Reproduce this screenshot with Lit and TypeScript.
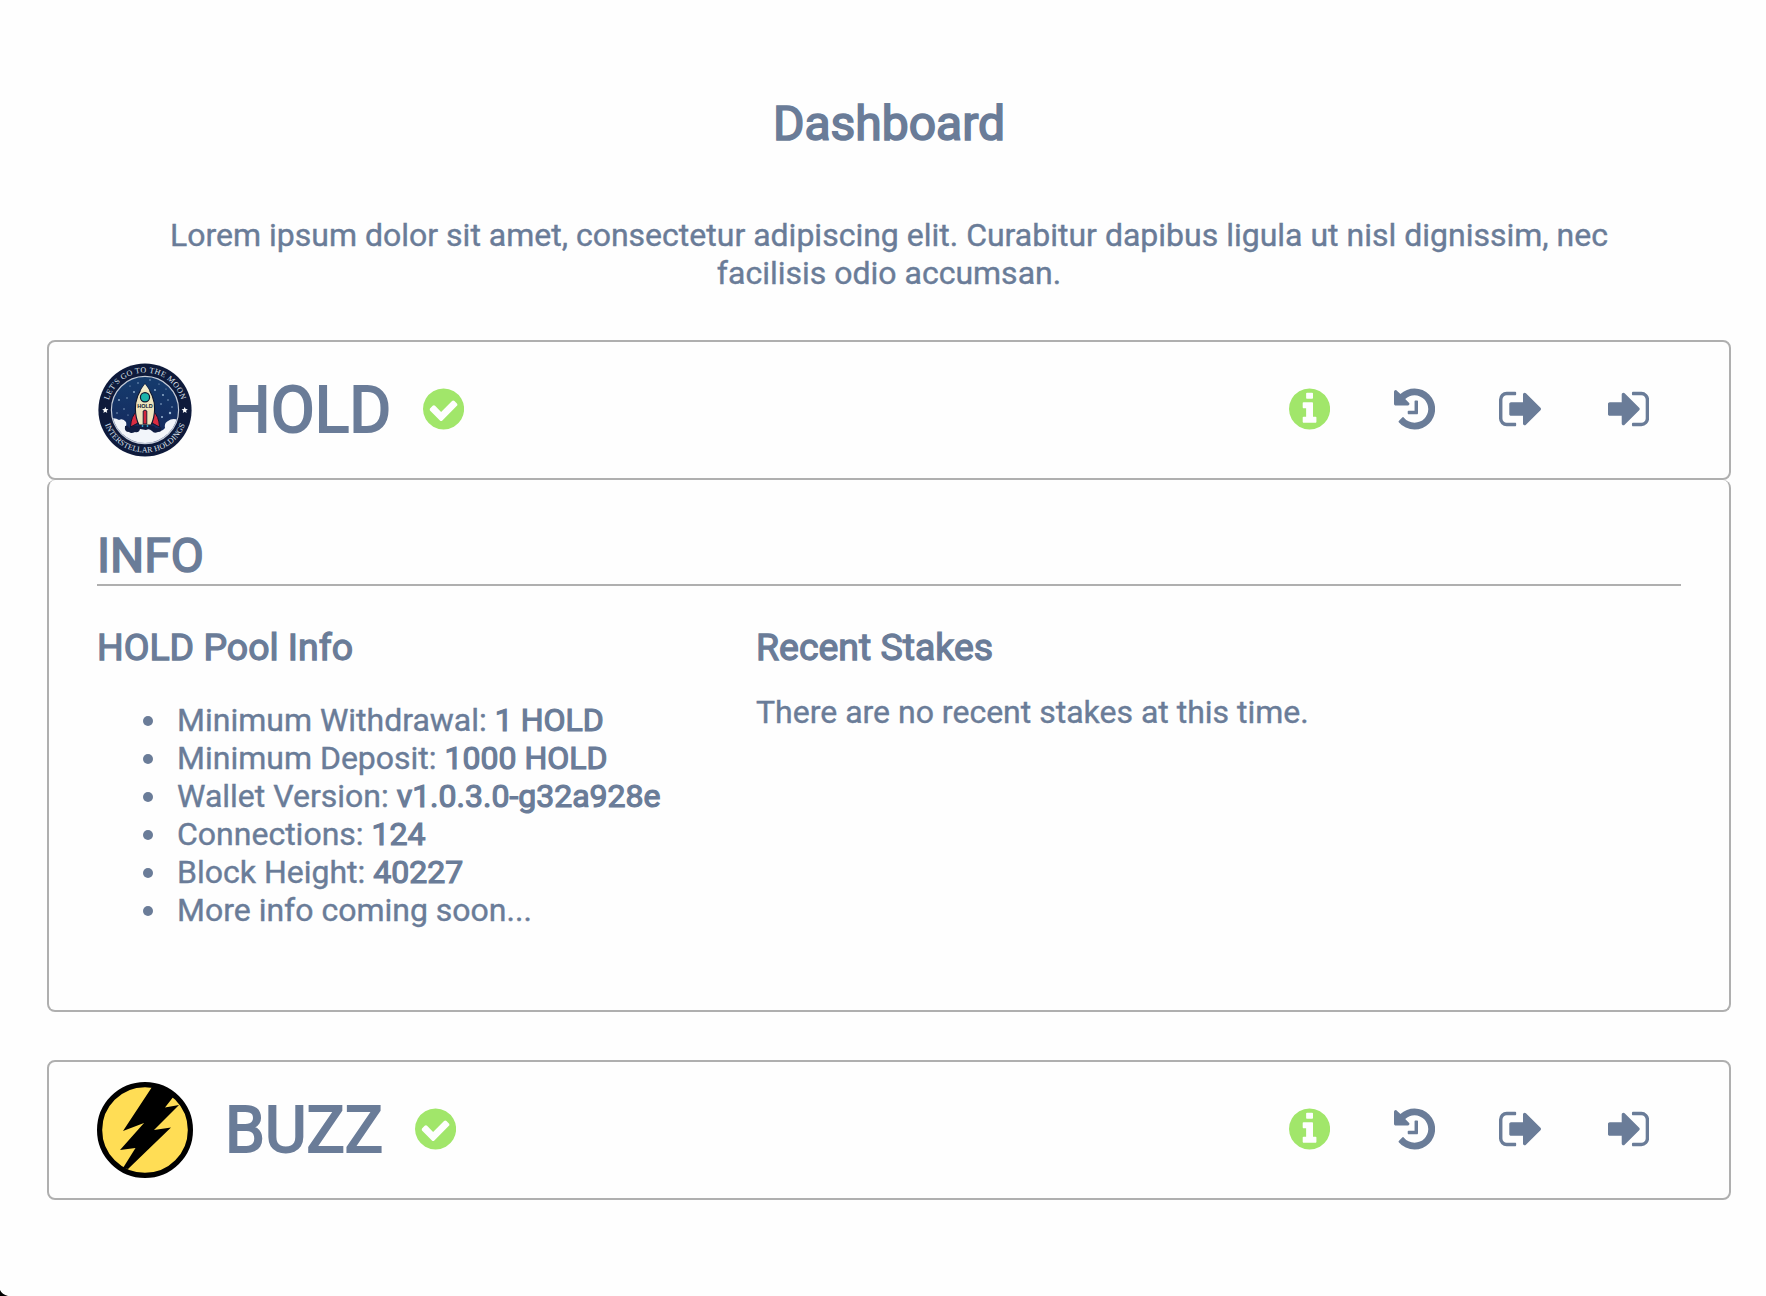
import { LitElement, html, css, svg } from "lit";
import { customElement, property } from "lit/decorators.js";

const DISC =
  "m252 162q0 209-103 385.5t-279.5 279.5-385.5 103-385.5-103-279.5-279.5-103-385.5 103-385.5 279.5-279.5 385.5-103 385.5 103 279.5 279.5 103 385.5z";

const ICONS: Record<string, { box: string; width: number; d: string }> = {
  check: {
    box: "128 0 1536 1792",
    width: 41.14,
    d: "M1412 734q0-28-18-46l-91-90q-19-19-45-19t-45 19l-408 407-226-226q-19-19-45-19t-45 19l-91 90q-18 18-18 46 0 27 18 45l362 362q19 19 45 19 27 0 46-19l543-543q18-18 18-45z" + DISC,
  },
  info: {
    box: "128 0 1536 1792",
    width: 41.14,
    d: "M1152 1376v-160q0-14-9-23t-23-9h-96v-512q0-14-9-23t-23-9h-320q-14 0-23 9t-9 23v160q0 14 9 23t23 9h96v320h-96q-14 0-23 9t-9 23v160q0 14 9 23t23 9h448q14 0 23-9t9-23zm-128-896v-160q0-14-9-23t-23-9h-192q-14 0-23 9t-9 23v160q0 14 9 23t23 9h192q14 0 23-9t9-23zm640 416q0 209-103 385.5t-279.5 279.5-385.5 103-385.5-103-279.5-279.5-103-385.5 103-385.5 279.5-279.5 385.5-103 385.5 103 279.5 279.5 103 385.5z",
  },
  history: {
    box: "128 0 1536 1792",
    width: 41.14,
    d: "M1664 896q0 156-61 298t-164 245-245 164-298 61q-172 0-327-72.5t-264-204.5q-7-10-6.5-22.5t8.5-20.5l137-138q10-9 25-9 16 2 23 12 73 95 179 147t225 52q104 0 198.5-40.5t163.5-109.5 109.5-163.5 40.5-198.5-40.5-198.5-109.5-163.5-163.5-109.5-198.5-40.5q-98 0-188 35.5t-160 101.5l137 138q31 30 14 69-17 40-59 40h-448q-26 0-45-19t-19-45v-448q0-42 40-59 39-17 69 14l130 129q107-101 244.5-156.5t284.5-55.5q156 0 298 61t245 164 164 245 61 298zm-640-288v448q0 14-9 23t-23 9h-320q-14 0-23-9t-9-23v-64q0-14 9-23t23-9h224v-352q0-14 9-23t23-9h64q14 0 23 9t9 23z",
  },
  withdraw: {
    box: "64 0 1664 1792",
    width: 44.57,
    d: "M704 1440q0 4 1 20t.5 26.5-3 23.5-10 19.5-20.5 6.5h-320q-119 0-203.5-84.5t-84.5-203.5v-704q0-119 84.5-203.5t203.5-84.5h320q13 0 22.5 9.5t9.5 22.5q0 4 1 20t.5 26.5-3 23.5-10 19.5-20.5 6.5h-320q-66 0-113 47t-47 113v704q0 66 47 113t113 47h312l11.5 1 11.5 3 8 5.5 7 9 2 13.5zm928-544q0 26-19 45l-544 544q-19 19-45 19t-45-19-19-45v-288h-448q-26 0-45-19t-19-45v-384q0-26 19-45t45-19h448v-288q0-26 19-45t45-19 45 19l544 544q19 19 19 45z",
  },
  deposit: {
    box: "128 0 1536 1792",
    width: 41.14,
    d: "M1312 896q0 26-19 45l-544 544q-19 19-45 19t-45-19-19-45v-288h-448q-26 0-45-19t-19-45v-384q0-26 19-45t45-19h448v-288q0-26 19-45t45-19 45 19l544 544q19 19 19 45zm352-352v704q0 119-84.5 203.5t-203.5 84.5h-320q-13 0-22.5-9.5t-9.5-22.5q0-4-1-20t-.5-26.5 3-23.5 10-19.5 20.5-6.5h320q66 0 113-47t47-113v-704q0-66-47-113t-113-47h-312l-11.5-1-11.5-3-8-5.5-7-9-2-13.5q0-4-1-20t-.5-26.5 3-23.5 10-19.5 20.5-6.5h320q119 0 203.5 84.5t84.5 203.5z",
  },
};

const icon = (name: string) => {
  const i = ICONS[name];
  return html`<svg viewBox=${i.box} width=${i.width} height="48" fill="currentColor" aria-hidden="true">
    <path d=${i.d}></path>
  </svg>`;
};

const STARS = [
  [30, 36, 0.7], [37, 30, 0.9], [41, 21, 0.7], [33, 24, 0.6], [22, 38, 0.9], [27, 47, 0.7],
  [58, 28, 0.9], [62, 22, 0.6], [66, 33, 0.9], [71, 38, 0.7], [64, 42, 0.8], [75, 45, 0.7],
  [73, 51, 1.2], [65, 55, 1], [53, 18, 0.7], [20, 51, 0.7], [69, 27, 0.6], [31, 53, 0.6],
];

const holdLogo = html`<svg viewBox="0 0 96 96" width="96" height="96">
  <defs>
    <path id="arc-top" d="M10.6 48A37.4 37.4 0 0 1 85.4 48"></path>
    <path id="arc-bottom" d="M5.4 48A42.6 42.6 0 0 0 90.6 48"></path>
    <clipPath id="sky"><circle cx="48" cy="48" r="33"></circle></clipPath>
    <linearGradient id="night" x1="0" y1="0" x2="0" y2="1">
      <stop offset="0" stop-color="#153c6e"></stop>
      <stop offset="1" stop-color="#14265a"></stop>
    </linearGradient>
  </defs>
  <circle cx="48" cy="48" r="46.6" fill="#0e1a3b"></circle>
  <circle cx="48" cy="48" r="33.6" fill="url(#night)" stroke="#c3cbd8" stroke-width="1.2"></circle>
  <g clip-path="url(#sky)">
    ${STARS.map(([x, y, r]) => svg`<circle cx=${x} cy=${y} r=${r} fill="#9db9d6"></circle>`)}
    <path d="M12 57Q18 55 22 58Q26 56 29 60Q30 64 28 67Q31 70 34 69Q36 65 39 67Q42 64 45 66L52 66Q54 64 57 69Q60 69 62 68Q65 70 68 66Q67 61 71 59Q76 55 84 59V84H12Z" fill="#f2f5fa"></path>
    <path d="M28 64Q31 63 32 66Q36 63 40 64L57 64Q59 68 64 65Q66 70 61 70Q57 72 55 69Q52 66 49 68L43 67Q42 71 38 70Q34 72 32 70Q27 70 28 64Z" fill="#101d42"></path>
  </g>
  <path d="M40 49Q34 54 33.5 65L41 61Z" fill="#d92c41" stroke="#0c1530" stroke-width="1"></path>
  <path d="M56 49Q62 54 62.5 65L55 61Z" fill="#d92c41" stroke="#0c1530" stroke-width="1"></path>
  <path d="M48 22Q38 34 38.4 47Q38.5 56 42 63H54Q57.5 56 57.6 47Q58 34 48 22Z" fill="#eee4bd" stroke="#0c1530" stroke-width="1.1"></path>
  <path d="M48 22Q45.2 25.5 43.5 29Q48 27 52.5 29Q50.8 25.5 48 22Z" fill="#f4edcf"></path>
  <circle cx="48" cy="35.3" r="4.6" fill="#1bb3ab" stroke="#0c1530" stroke-width="1.2"></circle>
  <text class="tiny" x="48" y="46.2" text-anchor="middle">HOLD</text>
  <path d="M46.2 49Q48 47 49.8 49V62H46.2Z" fill="#d3263c" stroke="#0c1530" stroke-width=".9"></path>
  <path d="M45.5 63V65M50.5 63V65" stroke="#2aa0c8" stroke-width="1.4"></path>
  <text class="ring top"><textPath href="#arc-top" startOffset="50%" text-anchor="middle">LET'S GO TO THE MOON</textPath></text>
  <text class="ring"><textPath href="#arc-bottom" startOffset="50%" text-anchor="middle">INTERSTELLAR HOLDINGS</textPath></text>
  <path d="M8.3 45l.9 2 2.2.2-1.7 1.5.5 2.2-1.9-1.2-1.9 1.2.5-2.2-1.7-1.5 2.2-.2z" fill="#fff"></path>
  <path d="M87.7 45l.9 2 2.2.2-1.7 1.5.5 2.2-1.9-1.2-1.9 1.2.5-2.2-1.7-1.5 2.2-.2z" fill="#fff"></path>
</svg>`;

const buzzLogo = html`<svg viewBox="0 0 96 96" width="96" height="96">
  <circle cx="48" cy="48" r="45.4" fill="#ffdd55" stroke="#000" stroke-width="5.2"></circle>
  <path d="M55 5Q68 6 77 14L68 25.500L82 23L57 48L74 45.500L31 87L26 86L38.500 66L23 68L47 41L26 49Z" fill="#000"></path>
</svg>`;

interface Coin {
  name: string;
  logo: unknown;
}

@customElement("coin-header")
export class CoinHeader extends LitElement {
  @property({ attribute: false }) coin!: Coin;

  static styles = css`
    :host {
      box-sizing: border-box;
      display: flex;
      align-items: center;
      height: 140px;
      padding: 0 80px 0 48px;
      border: 2px solid #afafaf;
      border-radius: 8px;
    }
    svg {
      display: block;
      flex: none;
    }
    .name {
      margin: 2px 32px 0;
      font-size: 64px;
      line-height: 76px;
      -webkit-text-stroke: 2px currentColor;
    }
    .ok {
      color: #a1e66a;
      margin-top: -3px;
    }
    .actions {
      display: flex;
      gap: 64px;
      margin: -3px 0 0 auto;
    }
    .active {
      color: #a1e66a;
    }
    .ring {
      font: 8px "Liberation Serif", serif;
      letter-spacing: 0.1px;
      fill: #dfe4ee;
      -webkit-text-stroke: 0;
    }
    .top {
      letter-spacing: 0.35px;
    }
    .tiny {
      font: bold 5.5px "Liberation Sans", sans-serif;
      fill: #0c1530;
      -webkit-text-stroke: 0;
    }
  `;

  render() {
    return html`
      ${this.coin.logo}
      <span class="name">${this.coin.name}</span>
      <span class="ok">${icon("check")}</span>
      <nav class="actions">
        <span class="active">${icon("info")}</span>
        <span>${icon("history")}</span>
        <span>${icon("withdraw")}</span>
        <span>${icon("deposit")}</span>
      </nav>
    `;
  }
}

@customElement("app-root")
export class AppRoot extends LitElement {
  private facts: [string, string][] = [
    ["Minimum Withdrawal:", "1 HOLD"],
    ["Minimum Deposit:", "1000 HOLD"],
    ["Wallet Version:", "v1.0.3.0-g32a928e"],
    ["Connections:", "124"],
    ["Block Height:", "40227"],
    ["More info coming soon...", ""],
  ];

  static styles = css`
    :host {
      box-sizing: border-box;
      display: block;
      position: relative;
      overflow: hidden;
      height: 1296px;
      padding: 96px 35px 0 47px;
      background: #fefefe;
      color: #6a7c98;
      font: 32px/38px Roboto, sans-serif;
      -webkit-text-stroke: 0.4px currentColor;
    }
    h1,
    h2,
    h3,
    b {
      font-weight: 400;
      margin: 0;
    }
    h1,
    h2 {
      font-size: 48px;
      line-height: 56px;
      -webkit-text-stroke: 1.7px currentColor;
    }
    h1 {
      text-align: center;
    }
    h3 {
      font-size: 37.44px;
      line-height: 44px;
      -webkit-text-stroke: 1.3px currentColor;
    }
    b {
      -webkit-text-stroke: 1.2px currentColor;
    }
    .intro {
      margin: 64px 96px 48px;
      text-align: center;
    }
    .panel {
      box-sizing: border-box;
      height: 532px;
      margin-bottom: 48px;
      padding: 48px 48px 0;
      border: 2px solid #afafaf;
      border-top: 0;
      border-radius: 8px;
    }
    h2 {
      border-bottom: 2px solid #afafaf;
    }
    .columns {
      display: grid;
      grid-template-columns: 659px 1fr;
      margin-top: 39px;
    }
    .facts {
      margin: 32px 0 0;
      padding-left: 46px;
      list-style: none;
    }
    .facts li {
      display: flex;
      align-items: center;
      white-space: pre;
    }
    .facts li::before {
      content: "";
      width: 10px;
      height: 10px;
      margin: 2px 24px 0 0;
      border-radius: 50%;
      background: currentColor;
    }
    .note {
      margin: 24px 0 0;
    }
    .corner {
      position: absolute;
      left: 0;
      bottom: 0;
      width: 8px;
      height: 6px;
      display: block;
    }
  `;

  render() {
    return html`
      <h1>Dashboard</h1>
      <p class="intro">
        Lorem ipsum dolor sit amet, consectetur adipiscing elit. Curabitur dapibus ligula ut nisl dignissim, nec
        facilisis odio accumsan.
      </p>
      <coin-header .coin=${{ name: "HOLD", logo: holdLogo }}></coin-header>
      <section class="panel">
        <h2>INFO</h2>
        <div class="columns">
          <div>
            <h3>HOLD Pool Info</h3>
            <ul class="facts">
              ${this.facts.map(([label, value]) => html`<li><span>${label} <b>${value}</b></span></li>`)}
            </ul>
          </div>
          <div>
            <h3>Recent Stakes</h3>
            <p class="note">There are no recent stakes at this time.</p>
          </div>
        </div>
      </section>
      <coin-header .coin=${{ name: "BUZZ", logo: buzzLogo }}></coin-header>
      <svg class="corner" viewBox="0 0 8 6"><path d="M0 0Q2 4.500 8 6H0Z"></path></svg>
    `;
  }
}
